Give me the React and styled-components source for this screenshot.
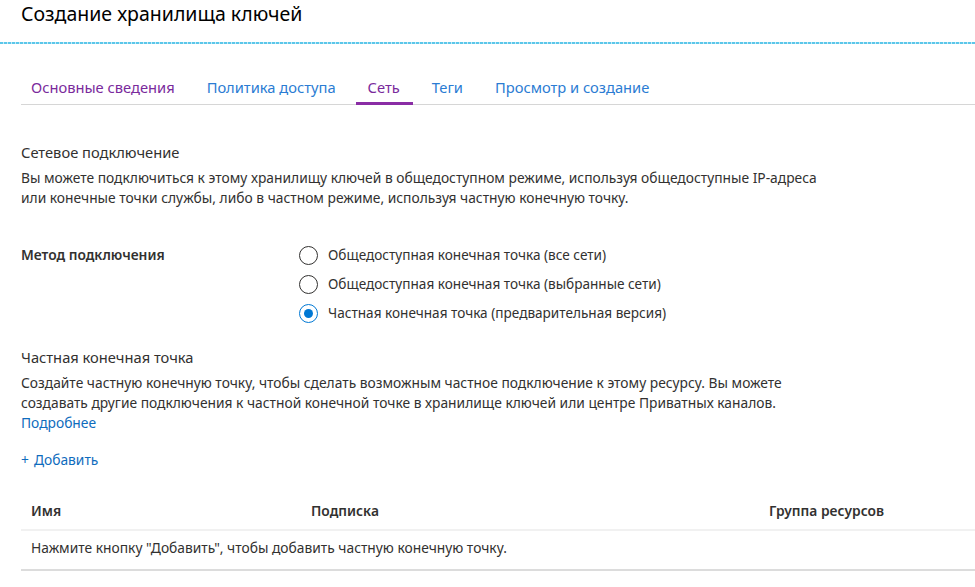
import React from 'react';
import styled, { createGlobalStyle } from 'styled-components';

const GlobalStyle = createGlobalStyle`
    body {
        margin: 0;
        background: #fff;
        font-family: "Noto Sans", "Open Sans", sans-serif;
        color: #323130;
    }
`;

const Page = styled.div`
    width: 975px;
    height: 587px;
    overflow: hidden;
`;

const Header = styled.div`
    padding: 0 21px;
    height: 42px;
`;

const DashedRule = styled.div`
    height: 2px;
    background: repeating-linear-gradient(90deg, #3fbde6 0 3px, #b9e7f6 3px 4px);
    opacity: 0.85;
`;

const Title = styled.h1`
    margin: 0;
    font-size: 19.5px;
    font-weight: 400;
    line-height: 28px;
    color: #000;
`;

const Body = styled.div`
    padding-left: 21px;
`;

const Tabs = styled.div`
    display: flex;
    margin-top: 30px;
    border-bottom: 1px solid #d6d6d6;
`;

const Tab = styled.a`
    position: relative;
    padding: 3px 10px 7px;
    margin-right: 12px;
    font-size: 14.7px;
    line-height: 20px;
    color: ${p => (p.$visited ? '#7a2a9c' : '#2b7cd3')};
    text-decoration: none;
    &::after {
        content: '';
        display: ${p => (p.$active ? 'block' : 'none')};
        position: absolute;
        left: -2px;
        right: -3px;
        bottom: -1px;
        height: 3px;
        background: #8a2da5;
    }
`;

const Section = styled.div`
    padding-top: ${p => p.$top || 0}px;
    max-width: 820px;
`;

const SectionTitle = styled.div`
    font-size: 14.7px;
    line-height: 20px;
    color: #323130;
`;

const Text = styled.p`
    margin: 6px 0 0;
    font-size: 13.8px;
    line-height: 20px;
    color: #323130;
`;

const Link = styled.a`
    display: block;
    font-size: 13.8px;
    line-height: 20px;
    color: #0f6cbd;
    text-decoration: none;
`;

const FieldRow = styled.div`
    display: flex;
    margin-top: 37px;
`;

const FieldLabel = styled.div`
    width: 278px;
    font-size: 13.8px;
    font-weight: 600;
    line-height: 20px;
`;

const RadioList = styled.div`
    display: flex;
    flex-direction: column;
    gap: 9px;
`;

const RadioItem = styled.label`
    display: flex;
    align-items: center;
    gap: 10px;
    font-size: 13.6px;
    line-height: 20px;
`;

const RadioCircle = styled.span`
    box-sizing: border-box;
    width: 19px;
    height: 19px;
    border-radius: 50%;
    border: 1px solid ${p => (p.$checked ? '#0078d4' : '#323130')};
    display: flex;
    align-items: center;
    justify-content: center;
    &::after {
        content: '';
        display: ${p => (p.$checked ? 'block' : 'none')};
        width: 9px;
        height: 9px;
        border-radius: 50%;
        background: #0078d4;
    }
`;

const AddButton = styled.a`
    display: inline-flex;
    gap: 5px;
    margin-top: 17px;
    font-size: 13.8px;
    line-height: 20px;
    color: #0f6cbd;
`;

const Table = styled.div`
    margin-top: 20px;
`;

const HeadRow = styled.div`
    display: grid;
    grid-template-columns: 280px 458px 1fr;
    padding: 11px 10px 8px;
    border-bottom: 2px solid #f1f1f1;
    font-size: 13.8px;
    font-weight: 600;
    line-height: 20px;
`;

const EmptyRow = styled.div`
    padding: 7px 10px 11px;
    border-bottom: 2px solid #dcdcdc;
    font-size: 13.8px;
    line-height: 20px;
`;

const methods = [
    'Общедоступная конечная точка (все сети)',
    'Общедоступная конечная точка (выбранные сети)',
    'Частная конечная точка (предварительная версия)',
];

export default function App() {
    return (
        <Page>
            <GlobalStyle />
            <Header>
                <Title>Создание хранилища ключей</Title>
            </Header>
            <DashedRule />
            <Body>
                <Tabs>
                    <Tab $visited>Основные сведения</Tab>
                    <Tab>Политика доступа</Tab>
                    <Tab $visited $active>Сеть</Tab>
                    <Tab>Теги</Tab>
                    <Tab>Просмотр и создание</Tab>
                </Tabs>
                <Section $top={37}>
                    <SectionTitle>Сетевое подключение</SectionTitle>
                    <Text>
                        Вы можете подключиться к этому хранилищу ключей в общедоступном режиме, используя общедоступные IP-адреса
                        или конечные точки службы, либо в частном режиме, используя частную конечную точку.
                    </Text>
                </Section>
                <FieldRow>
                    <FieldLabel>Метод подключения</FieldLabel>
                    <RadioList>
                        {methods.map((m, i) => (
                            <RadioItem key={m}>
                                <RadioCircle $checked={i === 2} />
                                {m}
                            </RadioItem>
                        ))}
                    </RadioList>
                </FieldRow>
                <Section $top={24}>
                    <SectionTitle>Частная конечная точка</SectionTitle>
                    <Text>
                        Создайте частную конечную точку, чтобы сделать возможным частное подключение к этому ресурсу. Вы можете
                        создавать другие подключения к частной конечной точке в хранилище ключей или центре Приватных каналов.
                    </Text>
                    <Link>Подробнее</Link>
                </Section>
                <AddButton>
                    <span>+</span>
                    <span>Добавить</span>
                </AddButton>
                <Table>
                    <HeadRow>
                        <span>Имя</span>
                        <span>Подписка</span>
                        <span>Группа ресурсов</span>
                    </HeadRow>
                    <EmptyRow>Нажмите кнопку "Добавить", чтобы добавить частную конечную точку.</EmptyRow>
                </Table>
            </Body>
        </Page>
    );
}
